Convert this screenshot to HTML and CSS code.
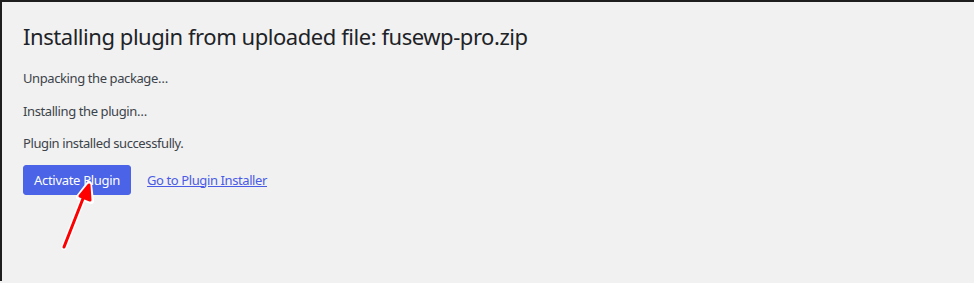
FILE: index.html
```html
<!DOCTYPE html>
<html lang="en">
<head>
    <meta charset="UTF-8">
    <title>Installing Plugin</title>
    <link rel="stylesheet" href="styles.css">
</head>
<body>
    <div class="wrap">
        <h1 class="title">Installing plugin from uploaded file: fusewp-pro.zip</h1>
        <p class="step">Unpacking the package&hellip;</p>
        <p class="step">Installing the plugin&hellip;</p>
        <p class="step">Plugin installed successfully.</p>
        <div class="actions">
            <a class="button-primary" href="#">Activate Plugin</a>
            <a class="link" href="#">Go to Plugin Installer</a>
        </div>

        <!-- annotation arrow over the screenshot -->
        <svg class="arrow" width="60" height="90" viewBox="0 0 60 90">
            <g stroke="#ffffff" stroke-width="6" stroke-linecap="round" stroke-linejoin="round" fill="#ffffff">
                <line x1="13" y1="78" x2="33" y2="27"/>
                <polygon points="38,15 40,32 28,28"/>
            </g>
            <g stroke="#ff0000" stroke-width="3" stroke-linecap="round" stroke-linejoin="round" fill="#ff0000">
                <line x1="13" y1="78" x2="33" y2="27"/>
                <polygon points="38,16 39,31 29,27"/>
            </g>
        </svg>
    </div>
</body>
</html>
```

FILE: styles.css
```css
body {
    margin: 0;
    background-color: #f1f1f1;
    border-top: 2px solid #1e1e1e;
    border-left: 2px solid #1e1e1e;
    min-height: 281px;
    box-sizing: border-box;
    font-family: 'Noto Sans', 'Open Sans', sans-serif;
    color: #3c434a;
}

.wrap {
    position: relative;
    padding: 0 21px;
}

.title {
    margin: 0;
    padding: 19px 0 0;
    font-size: 22px;
    font-weight: 400;
    letter-spacing: -0.45px;
    line-height: 30px;
    color: #1d2327;
}

.step {
    margin: 13px 0 0;
    font-size: 13px;
    letter-spacing: -0.4px;
    line-height: 19.5px;
}

.step:first-of-type {
    margin-top: 18px;
}

.actions {
    display: flex;
    align-items: center;
    gap: 16px;
    margin-top: 11px;
}

.button-primary {
    display: inline-block;
    background-color: #4a63e7;
    color: #ffffff;
    font-size: 13px;
    letter-spacing: -0.3px;
    line-height: 28px;
    padding: 0 10px;
    border: 1px solid #4a63e7;
    border-radius: 3px;
    text-decoration: none;
}

.link {
    color: #4a5be6;
    font-size: 13px;
    letter-spacing: -0.4px;
    text-decoration: underline;
}

.arrow {
    position: absolute;
    left: 49px;
    top: 167px;
}
```
